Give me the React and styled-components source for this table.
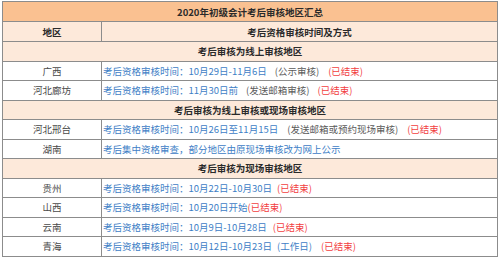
import React from "react";
import styled, { createGlobalStyle } from "styled-components";

const GlobalStyle = createGlobalStyle`
  html, body {
    margin: 0;
    padding: 0;
    background: #fff;
  }
  body {
    font-family: "Noto Sans CJK SC", "Microsoft YaHei", sans-serif;
  }
`;

const Wrap = styled.div`
  padding: 1px 2px 0 2px;
`;

const Table = styled.table`
  width: 496px;
  border-collapse: collapse;
  table-layout: fixed;
  font-size: 9.5px;
  color: #333;
  border: 1px solid #8c8c8c;
`;

const Row = styled.tr`
  height: ${(p) => p.$h || 19.5}px;
`;

const Cell = styled.td`
  border: 1px solid #8c8c8c;
  padding: 0 1px;
  line-height: 12px;
  white-space: nowrap;
  overflow: hidden;
  text-align: ${(p) => (p.$center ? "center" : "left")};
  font-weight: ${(p) => (p.$bold ? 700 : 400)};
  background: ${(p) =>
    p.$tone === "title" ? "#fac191" : p.$tone === "section" ? "#fde9da" : "#fff"};
  color: ${(p) => (p.$bold ? "#2a2a2a" : "#4a4a4a")};
`;

const colors = {
  blue: "#3e80c6",
  gray: "#5a5a5a",
  red: "#f2403f",
};

const Seg = styled.span`
  margin-left: ${(p) => p.$gap || 0}px;
  color: ${(p) => colors[p.$tone] || colors.blue};
`;

const groups = [
  {
    title: "考后审核为线上审核地区",
    rows: [
      [
        "广西",
        [
          ["blue", "考后资格审核时间：10月29日-11月6日", 0],
          ["gray", "(公示审核)", 8],
          ["red", "(已结束)", 9],
        ],
      ],
      [
        "河北廊坊",
        [
          ["blue", "考后资格审核时间：11月30日前", 0],
          ["gray", "(发送邮箱审核)", 8],
          ["red", "(已结束)", 8],
        ],
      ],
    ],
  },
  {
    title: "考后审核为线上审核或现场审核地区",
    rows: [
      [
        "河北邢台",
        [
          ["blue", "考后资格审核时间：10月26日至11月15日", 0],
          ["gray", "(发送邮箱或预约现场审核)", 9],
          ["red", "(已结束)", 9],
        ],
      ],
      ["湖南", [["blue", "考后集中资格审查，部分地区由原现场审核改为网上公示", 0]]],
    ],
  },
  {
    title: "考后审核为现场审核地区",
    rows: [
      [
        "贵州",
        [
          ["blue", "考后资格审核时间：10月22日-10月30日", 0],
          ["red", "(已结束)", 5],
        ],
      ],
      [
        "山西",
        [
          ["blue", "考后资格审核时间：10月20日开始", 0],
          ["red", "(已结束)", 0],
        ],
      ],
      [
        "云南",
        [
          ["blue", "考后资格审核时间：10月9日-10月28日", 0],
          ["red", "(已结束)", 6],
        ],
      ],
      [
        "青海",
        [
          ["blue", "考后资格审核时间：10月12日-10月23日", 0],
          ["blue", "(工作日)", 5],
          ["red", "(已结束)", 9],
        ],
      ],
      ["", []],
    ],
  },
];

export default function App() {
  return (
    <Wrap>
      <GlobalStyle />
      <Table>
        <colgroup>
          <col style={{ width: 99 }} />
          <col />
        </colgroup>
        <tbody>
          <Row $h={20}>
            <Cell colSpan={2} $center $bold $tone="title">
              2020年初级会计考后审核地区汇总
            </Cell>
          </Row>
          <Row $h={20}>
            <Cell $center $bold $tone="section">
              地区
            </Cell>
            <Cell $center $bold $tone="section">
              考后资格审核时间及方式
            </Cell>
          </Row>
          {groups.map((g) => (
            <React.Fragment key={g.title}>
              <Row>
                <Cell colSpan={2} $center $bold $tone="section">
                  {g.title}
                </Cell>
              </Row>
              {g.rows.map(([area, segs], i) => (
                <Row key={g.title + i}>
                  <Cell $center>{area}</Cell>
                  <Cell>
                    {segs.map(([tone, text, gap], j) => (
                      <Seg key={j} $tone={tone} $gap={gap}>
                        {text}
                      </Seg>
                    ))}
                  </Cell>
                </Row>
              ))}
            </React.Fragment>
          ))}
        </tbody>
      </Table>
    </Wrap>
  );
}
